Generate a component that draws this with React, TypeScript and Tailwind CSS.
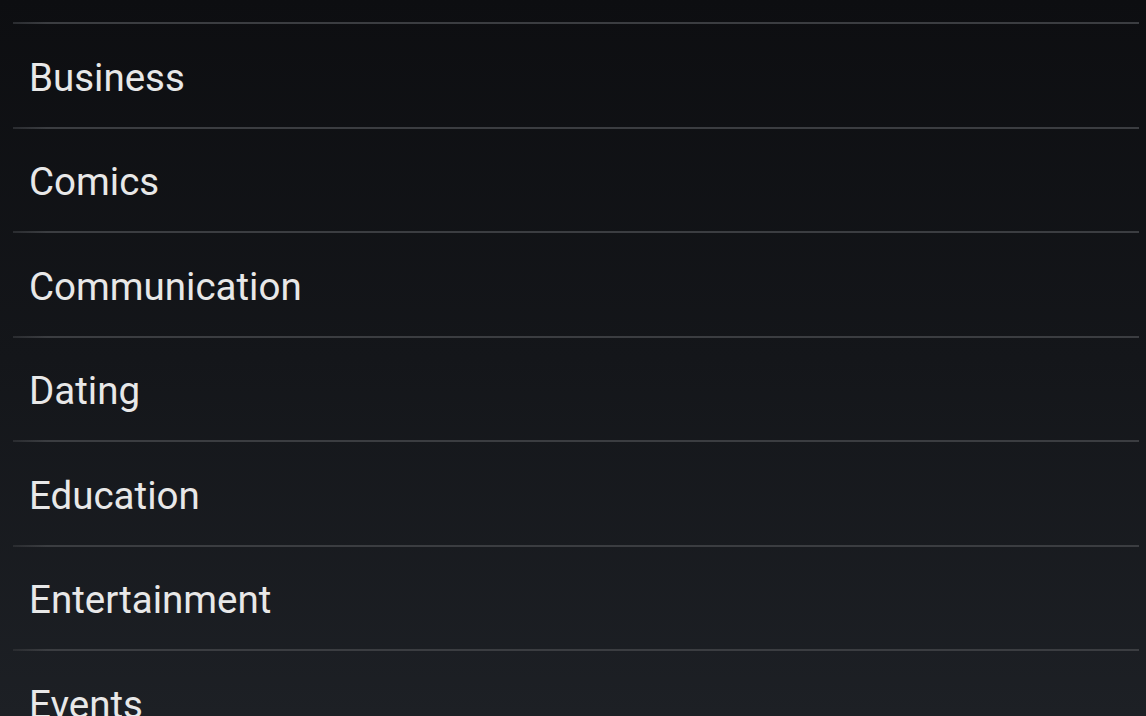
import React from "react";

const items = [
  "Business",
  "Comics",
  "Communication",
  "Dating",
  "Education",
  "Entertainment",
  "Events",
];

export default function App() {
  return (
    <div
      className="w-[1146px] h-[716px] overflow-hidden bg-gradient-to-b from-[#0d0e11] via-[#14161a] to-[#1d2025]"
      style={{ fontFamily: "Roboto, 'Noto Sans', sans-serif" }}
    >
      <div className="h-[22px]" />
      <ul className="pl-[13px] pr-[7px]">
        {items.map((label) => (
          <li key={label} className="flex flex-col">
            <div className="h-[2px] bg-gradient-to-r from-[#2a2c30] via-[#3b3d41] via-[3%] to-[#3b3d41]" />
            <div className="h-[102.5px] flex items-center pt-[5px] pl-[16px] text-[38.5px] leading-none text-[#e8e8e8]">
              {label}
            </div>
          </li>
        ))}
      </ul>
    </div>
  );
}
